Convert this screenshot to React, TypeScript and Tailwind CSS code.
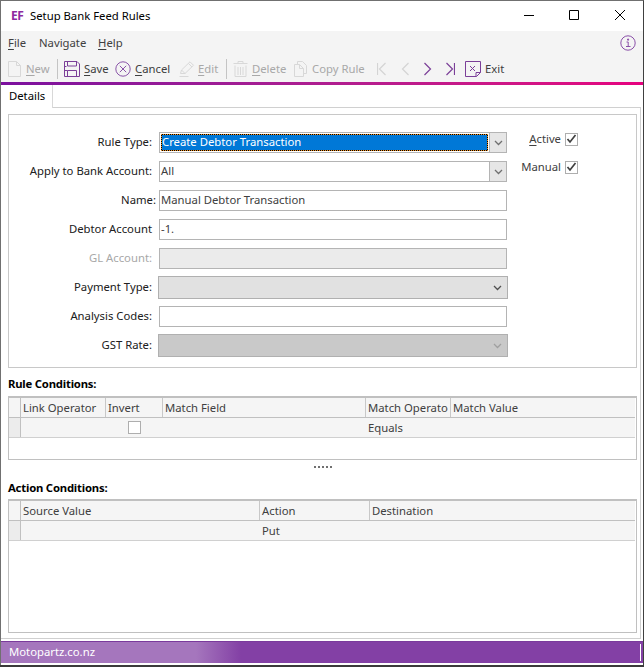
import type { ReactNode } from "react";

const ink = "#404040";

function Mn({ children }: { children: ReactNode }) {
  return <span className="underline underline-offset-2 decoration-1">{children}</span>;
}

function NewIcon() {
  return (
    <svg width="13" height="16" viewBox="0 0 13 16" fill="none" stroke="#d8d8d8" strokeWidth="1">
      <path d="M.5.5h8l4 4v11H.5z M8.5.5v4h4" />
    </svg>
  );
}

function SaveIcon() {
  return (
    <svg width="16" height="16" viewBox="0 0 16 16" fill="none" stroke="#7b3f98" strokeWidth="1">
      <path d="M.5.5h12.5l2.5 2.5v12.5H.5z M3.5.5v4.5h9V.5 M3.5 15.5V9.5h9v6 M.5 5.5h2 M.5 9.5h3" />
    </svg>
  );
}

function CancelIcon() {
  return (
    <svg width="16" height="16" viewBox="0 0 16 16" fill="none" stroke="#8a55a8" strokeWidth="1">
      <circle cx="8" cy="8" r="7.2" />
      <path d="M4.8 4.8l6.4 6.4M11.2 4.8l-6.4 6.4" />
    </svg>
  );
}

function EditIcon() {
  return (
    <svg width="16" height="16" viewBox="0 0 16 16" fill="none" stroke="#d8d8d8" strokeWidth="1">
      <path d="M1.5 12.5l1-3.5L11 .8l3.5 3.5L6 12.5z M2.5 9l3.5 3.5 M9.5 2.5L13 6 M.5 15.5h9" />
    </svg>
  );
}

function DeleteIcon() {
  return (
    <svg width="15" height="16" viewBox="0 0 15 16" fill="none" stroke="#d8d8d8" strokeWidth="1">
      <path d="M.5 2.5h14 M5 2.5v-2h5v2 M2 4.5v11h11v-11 M5 6v8 M7.5 6v8 M10 6v8" />
    </svg>
  );
}

function CopyIcon() {
  return (
    <svg width="13" height="16" viewBox="0 0 13 16" fill="none" stroke="#d8d8d8" strokeWidth="1">
      <path d="M3.5 3v-2.5h5l4 4v8h-3 M.5 3.5h5l4 4v8h-9z M5.5 3.5v4h4" />
    </svg>
  );
}

function NavIcon({ kind, on }: { kind: "first" | "prev" | "next" | "last"; on: boolean }) {
  const d = {
    first: "M.5 1v12 M8.5 1L2.5 7l6 6",
    prev: "M7.5 1L1.5 7l6 6",
    next: "M.5 1l6 6-6 6",
    last: "M.5 1l6 6-6 6 M8.5 1v12",
  }[kind];
  const w = kind === "first" || kind === "last" ? 9 : 8;
  return (
    <svg width={w} height="14" viewBox={`0 0 ${w} 14`} fill="none" stroke={on ? "#7b3f98" : "#d4d4d4"} strokeWidth="1.2">
      <path d={d} />
    </svg>
  );
}

function ExitIcon() {
  return (
    <svg width="16" height="16" viewBox="0 0 16 16" fill="none" stroke="#7b3f98" strokeWidth="1">
      <path d="M.5.5h15v11l-4 4H.5z M11 15.5v-4h4.5 M5 5l5 5M10 5l-5 5" />
    </svg>
  );
}

function Chevron({ color = "#707070" }: { color?: string }) {
  return (
    <svg width="9" height="6" viewBox="0 0 9 6" fill="none" stroke={color} strokeWidth="1.3">
      <path d="M1 1l3.5 3.5L8 1" />
    </svg>
  );
}

function Check() {
  return (
    <span className="flex h-[13px] w-[13px] items-center justify-center border border-[#aeaeae] bg-white">
      <svg width="11" height="10" viewBox="0 0 11 10" fill="none" stroke="#404040" strokeWidth="1.7">
        <path d="M1.5 5l2.5 3 5.5-7" />
      </svg>
    </span>
  );
}

function Row({ label, children, disabled }: { label: ReactNode; children: ReactNode; disabled?: boolean }) {
  return (
    <div className="flex h-[21px] items-center">
      <div className={`w-[143px] shrink-0 text-right ${disabled ? "text-[#a8a8a8]" : "text-[#202020]"}`}>{label}</div>
      {children}
    </div>
  );
}

function TextBox({ value, grey }: { value?: string; grey?: boolean }) {
  return (
    <div
      className={`ml-[7px] h-[21px] w-[348px] border border-[#b4b4b4] pl-[1px] leading-[17px] text-[#404040] ${
        grey ? "bg-[#ebebeb]" : "bg-white"
      }`}
    >
      {value}
    </div>
  );
}

function Combo({ value, selected }: { value: string; selected?: boolean }) {
  return (
    <div className="ml-[7px] flex h-[21px] w-[348px] border border-[#b4b4b4] bg-white">
      <div className="min-w-0 flex-1 p-[1px]">
        {selected ? (
          <div className="h-full border border-dotted border-[#f09020] bg-black">
            <div className="h-full bg-[#0078d7] leading-[14px] text-white">{value}</div>
          </div>
        ) : (
          <div className="h-full leading-[15px] text-[#404040]">{value}</div>
        )}
      </div>
      <div className="flex w-[17px] items-center justify-center border-l border-[#b4b4b4] bg-[#e6e6e6]">
        <Chevron />
      </div>
    </div>
  );
}

function FlatCombo({ color, chevron }: { color: string; chevron: string }) {
  return (
    <div className={`ml-[6px] flex h-[23px] w-[350px] items-center justify-end border border-[#b0b0b0] pr-[5px] ${color}`}>
      <Chevron color={chevron} />
    </div>
  );
}

function GridHeader({ cols, last }: { cols: { label: string; width: number }[]; last: string }) {
  return (
    <div className="flex h-[20px] border-b border-[#c0c0c0] bg-[#f5f5f5]">
      <div className="w-[12px] shrink-0 border-r border-[#c0c0c0]" />
      {cols.map((c) => (
        <div
          key={c.label}
          style={{ width: c.width }}
          className="shrink-0 whitespace-nowrap border-r border-[#c8c8c8] pl-[2px] leading-[19px] text-[#404040]"
        >
          {c.label}
        </div>
      ))}
      <div className="flex-1 pl-[2px] leading-[19px] text-[#404040]">{last}</div>
    </div>
  );
}

function GridRow({ children }: { children: ReactNode }) {
  return (
    <div className="flex h-[20px] border-b border-[#d0d0d0] bg-[#f5f5f5]">
      <div className="w-[12px] shrink-0 border-r border-[#c0c0c0] bg-[#ececec]" />
      {children}
    </div>
  );
}

function ToolItem({
  icon,
  children,
  disabled,
  width,
  gap = 5,
}: {
  icon: ReactNode;
  children: ReactNode;
  disabled?: boolean;
  width: number;
  gap?: number;
}) {
  return (
    <div
      style={{ width, gap }}
      className={`flex shrink-0 items-center whitespace-nowrap ${disabled ? "text-[#a8a8a8]" : "text-[#404040]"}`}
    >
      {icon}
      <span>{children}</span>
    </div>
  );
}

export default function App() {
  return (
    <div
      className="flex h-[667px] w-[644px] flex-col overflow-hidden bg-[#3a3a3a] text-[11.3px]"
      style={{ fontFamily: '"Noto Sans", "Open Sans", sans-serif', color: ink }}
    >
      <div className="flex h-[665px] flex-col border-t border-l border-r border-t-[#707070] border-l-[#707070] border-r-[#404040] bg-white">
        {/* title bar */}
        <div className="flex h-[30px] shrink-0 items-center bg-white">
          <span className="ml-[10px] w-[19px] text-[12px] font-bold tracking-[-0.5px] text-[#8e2a9e]">EF</span>
          <span className="text-black">Setup Bank Feed Rules</span>
          <div className="ml-auto flex items-center">
            <svg width="46" height="30" viewBox="0 0 46 30" stroke="#000" strokeWidth="1">
              <path d="M18 14.5h10" />
            </svg>
            <svg width="46" height="30" viewBox="0 0 46 30" fill="none" stroke="#000" strokeWidth="1">
              <path d="M17.5 9.5h9v9h-9z" />
            </svg>
            <svg width="45" height="30" viewBox="0 0 45 30" fill="none" stroke="#000" strokeWidth="1">
              <path d="M17 9l10 10M27 9L17 19" />
            </svg>
          </div>
        </div>

        {/* menu */}
        <div className="flex h-[26px] shrink-0 items-center bg-[#f4f4f4] pb-[2px] pl-[7px] pr-[7px] text-[#404040]">
          <span className="w-[31px]"><Mn>F</Mn>ile</span>
          <span className="w-[59px]">Navigate</span>
          <span><Mn>H</Mn>elp</span>
          <svg className="ml-auto" width="16" height="16" viewBox="0 0 16 16" fill="none" stroke="#8a4fa8" strokeWidth="1">
            <circle cx="8" cy="8" r="7.2" />
            <path d="M6.5 7h1.7v4.5M6 11.5h4.5M7.6 4h1v1.2h-1z" />
          </svg>
        </div>

        {/* toolbar */}
        <div className="flex h-[25px] shrink-0 items-center bg-[#f4f4f4] pb-[1px] pl-[7px]">
          <ToolItem icon={<NewIcon />} disabled width={49} gap={5}><Mn>N</Mn>ew</ToolItem>
          <div className="h-[20px] w-px shrink-0 bg-[#c4c4c4]" />
          <div className="w-[6px] shrink-0" />
          <ToolItem icon={<SaveIcon />} width={51} gap={4}><Mn>S</Mn>ave</ToolItem>
          <ToolItem icon={<CancelIcon />} width={64} gap={4}><Mn>C</Mn>ancel</ToolItem>
          <ToolItem icon={<EditIcon />} disabled width={47} gap={3}><Mn>E</Mn>dit</ToolItem>
          <div className="h-[20px] w-px shrink-0 bg-[#c4c4c4]" />
          <div className="w-[6px] shrink-0" />
          <ToolItem icon={<DeleteIcon />} disabled width={61} gap={4}><Mn>D</Mn>elete</ToolItem>
          <ToolItem icon={<CopyIcon />} disabled width={83} gap={5}>Copy Rule</ToolItem>
          <div className="flex w-[88px] shrink-0 items-center">
            <span className="w-[24px]"><NavIcon kind="first" on={false} /></span>
            <span className="w-[23px]"><NavIcon kind="prev" on={false} /></span>
            <span className="w-[22px]"><NavIcon kind="next" on /></span>
            <NavIcon kind="last" on />
          </div>
          <ToolItem icon={<ExitIcon />} width={45} gap={4}>Exit</ToolItem>
        </div>

        <div className="h-[3px] shrink-0 bg-gradient-to-r from-[#7b0f9e] to-[#e6007e]" />

        {/* tab page */}
        <div className="flex min-h-0 flex-1 flex-col pr-[2px] pb-[2px]">
          <div className="flex h-[23px] shrink-0 items-end">
            <div className="flex h-[23px] w-[52px] items-center border-r border-[#d8d8d8] pb-[1px] pl-[8px] text-black">Details</div>
            <div className="h-px flex-1 bg-[#d0d0d0]" />
          </div>

          <div className="flex min-h-0 flex-1 flex-col border-r border-b border-[#d0d0d0] pl-[7px] pr-[3px] pt-[6px] pb-[5px]">
            {/* form panel */}
            <div className="flex h-[254px] shrink-0 border border-[#c8c8c8] pt-[17px]">
              <div className="flex w-[507px] shrink-0 flex-col gap-[8px]">
                <Row label="Rule Type:"><Combo value="Create Debtor Transaction" selected /></Row>
                <Row label="Apply to Bank Account:"><Combo value="All" /></Row>
                <Row label={<span className="relative left-[4px]">Name:</span>}><TextBox value="Manual Debtor Transaction" /></Row>
                <Row label="Debtor Account"><TextBox value="-1." /></Row>
                <Row label="GL Account:" disabled><TextBox grey /></Row>
                <Row label="Payment Type:"><FlatCombo color="bg-[#e1e1e1]" chevron="#505050" /></Row>
                <Row label="Analysis Codes:"><TextBox /></Row>
                <Row label="GST Rate:"><FlatCombo color="bg-[#c9c9c9]" chevron="#a0a0a0" /></Row>
              </div>
              <div className="-mt-[1px] flex w-[62px] flex-col items-end gap-[11px] text-[#404040]">
                <div className="flex items-center gap-[4px]">
                  <span><Mn>A</Mn>ctive</span>
                  <Check />
                </div>
                <div className="flex items-center gap-[4px]">
                  <span>Manual</span>
                  <Check />
                </div>
              </div>
            </div>

            <div className="mt-[8px] h-[20px] shrink-0 font-bold leading-[16px] tracking-[-0.2px] text-black">Rule Conditions:</div>

            {/* rule grid */}
            <div className="h-[64px] shrink-0 border border-t-2 border-[#c0c0c0] pr-[1px]">
              <GridHeader
                cols={[
                  { label: "Link Operator", width: 85 },
                  { label: "Invert", width: 57 },
                  { label: "Match Field", width: 203 },
                  { label: "Match Operato", width: 85 },
                ]}
                last="Match Value"
              />
              <GridRow>
                <div className="w-[85px] shrink-0" />
                <div className="flex w-[57px] shrink-0 items-center justify-center">
                  <span className="h-[13px] w-[13px] border border-[#aeaeae] bg-white" />
                </div>
                <div className="ml-[203px] pl-[2px] leading-[20px] text-[#404040]">Equals</div>
              </GridRow>
            </div>

            <div className="flex h-[17px] shrink-0 items-center justify-center pb-[3px]">
              <div className="flex gap-[2px]">
                {[0, 1, 2, 3, 4].map((i) => (
                  <span key={i} className="h-[2px] w-[2px] bg-[#707070]" />
                ))}
              </div>
            </div>

            <div className="mt-[4px] h-[18px] shrink-0 font-bold leading-[14px] tracking-[-0.2px] text-black">Action Conditions:</div>

            {/* action grid */}
            <div className="min-h-0 flex-1 border border-t-2 border-[#c0c0c0] pr-[1px]">
              <GridHeader
                cols={[
                  { label: "Source Value", width: 239 },
                  { label: "Action", width: 110 },
                ]}
                last="Destination"
              />
              <GridRow>
                <div className="ml-[239px] pl-[2px] leading-[20px] text-[#404040]">Put</div>
              </GridRow>
            </div>
          </div>
        </div>

        {/* status bar */}
        <div
          className="flex h-[22px] shrink-0 items-center border-t border-[#7a3a9c] pl-[8px] pr-[2px] text-white"
          style={{ background: "linear-gradient(90deg, #a576bd 0, #a576bd 195px, #8340a5 240px)" }}
        >
          <span>Motopartz.co.nz</span>
          <span className="ml-auto h-[17px] w-px bg-white" />
        </div>
        <div className="h-[2px] shrink-0 bg-white" />
      </div>
    </div>
  );
}
